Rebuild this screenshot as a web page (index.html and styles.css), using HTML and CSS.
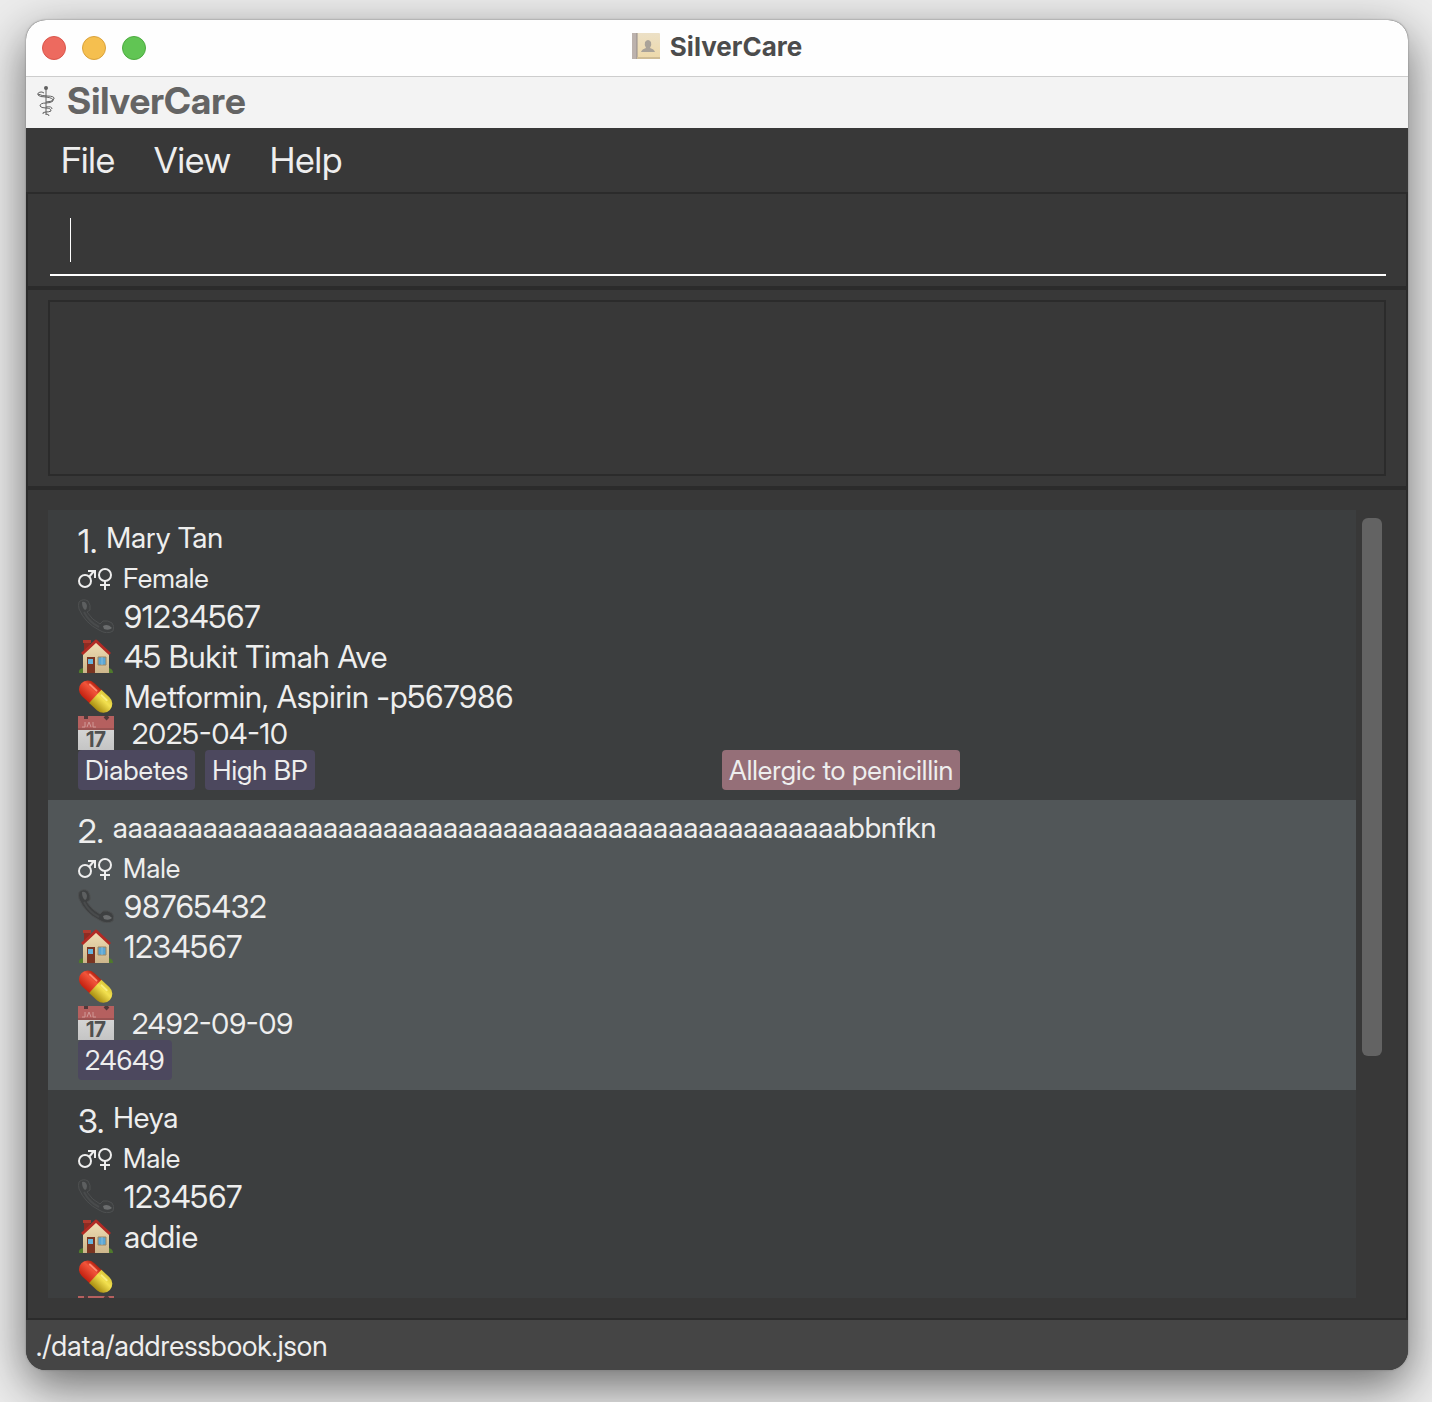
FILE: index.html
```html
<!DOCTYPE html>
<html lang="en">
<head>
<meta charset="utf-8">
<title>SilverCare</title>
<link rel="stylesheet" href="styles.css">
</head>
<body>
<svg class="sprite" aria-hidden="true">
  <defs>
    <linearGradient id="wall" x1="0" y1="0" x2="0" y2="1"><stop offset="0" stop-color="#f0deb4"/><stop offset="1" stop-color="#cdb68c"/></linearGradient>
    <linearGradient id="red" x1="0" y1="0" x2="0" y2="1"><stop offset="0" stop-color="#b5200f"/><stop offset=".35" stop-color="#f2543a"/><stop offset="1" stop-color="#c3200f"/></linearGradient>
    <linearGradient id="yellow" x1="0" y1="0" x2="0" y2="1"><stop offset="0" stop-color="#d9c63a"/><stop offset=".35" stop-color="#f3e14f"/><stop offset="1" stop-color="#a98d10"/></linearGradient>
    <linearGradient id="paper" x1="0" y1="0" x2="0" y2="1"><stop offset="0" stop-color="#e0e0e0"/><stop offset="1" stop-color="#c4c4c4"/></linearGradient>
    <linearGradient id="cover" x1="0" y1="0" x2="0" y2="1"><stop offset="0" stop-color="#ece0c6"/><stop offset="1" stop-color="#eed9a9"/></linearGradient>
  </defs>
  <symbol id="phone" viewBox="0 0 36 34">
    <path d="M1 3Q5-1 10 2Q13 6 12 11L9 13Q14 21 22 25L25 22Q30 21 34 24Q37 27 35 32Q29 36 21 31Q7 24 1 10Q0 6 1 3Z" fill="#3e4041" stroke="#4e5051"/>
    <path d="M4 3Q8 2 9 7Q9 10 7 11Q4 9 4 3Z" fill="#5d5f60"/>
    <path d="M25 27Q30 24 34 29Q31 32 26 30Z" fill="#6b6d6e"/>
    <path d="M6 13Q11 23 21 28" fill="none" stroke="#494b4c" stroke-width="2"/>
  </symbol>
  <symbol id="house" viewBox="0 0 36 34">
    <path d="M6 2h6v9H6z" fill="#8f2b22"/><path d="M5 1h8v3H5z" fill="#b03a2e"/>
    <path d="M1 34q-1-4 4-5h26q4 1 4 5z" fill="#4f7a2c"/>
    <path d="M5 15L18 3l13 12v19H5z" fill="url(#wall)"/>
    <path d="M4 15L18 2l14 13" fill="none" stroke="#b32a24" stroke-width="3" stroke-linejoin="round"/>
    <path d="M9 18h8v16H9z" fill="#7a3522"/><path d="M10 20h5v5h-5z" fill="#65b4dc"/>
    <path d="M20 18h8v8h-8z" fill="#5ba7d6" stroke="#9f8660"/><path d="M24 18v8" stroke="#87bddb"/>
  </symbol>
  <symbol id="pill" viewBox="0 0 36 34">
    <g transform="rotate(43 18 18)">
      <path d="M18 9H7a9 9 0 0 0 0 18h11z" fill="url(#red)"/>
      <path d="M17 9h11a9 9 0 0 1 0 18H17z" fill="url(#yellow)"/>
      <path d="M5 13h9" stroke="#ff8a72" stroke-width="2" stroke-linecap="round"/>
      <path d="M21 13h7" stroke="#f9ee80" stroke-width="2" stroke-linecap="round"/>
    </g>
  </symbol>
  <symbol id="calendar" viewBox="0 0 36 34">
    <path d="M0 0h36v34H0z" fill="url(#paper)"/><path d="M0 0h36v14H0z" fill="#b5605f"/>
    <path d="M0 12h36v2H0z" fill="#9b5352"/>
    <path d="M8 0v3M27 0l3 3" stroke="#52383a" stroke-width="4"/>
    <path d="M7 6v5H4M9 11l2-5 2 5M15 6v5h3" fill="none" stroke="#cf9997"/>
  </symbol>
  <symbol id="genders" viewBox="0 0 36 26">
    <g fill="none" stroke="#eee" stroke-width="2">
      <circle cx="7" cy="14" r="6"/><path d="M11 10l5-6M10 4h7v7"/>
      <circle cx="27" cy="8" r="6"/><path d="M27 14v9M22 18h10"/>
    </g>
  </symbol>
</svg>

<main class="window">
  <div class="titlebar">
    <div class="lights">
      <button class="light close" aria-label="Close"></button>
      <button class="light minimise" aria-label="Minimise"></button>
      <button class="light zoom" aria-label="Zoom"></button>
    </div>
    <div class="title">
      <svg class="book" viewBox="0 0 28 26" aria-hidden="true">
        <rect width="28" height="26" rx="1" fill="url(#cover)"/>
        <path d="M0 0h5v26H0z" fill="#bcb2ad"/><path d="M5 0v26" stroke="#958d89"/>
        <path d="M5 25h23" stroke="#d0bd96" stroke-width="2"/>
        <path d="M9 19q1-3 5-4q-2-3-1-6q3-4 6 0q1 3-1 6q4 1 5 4z" fill="#aaa399"/>
      </svg>
      <span>SilverCare</span>
    </div>
  </div>

  <header class="brand">
    <svg class="staff" viewBox="0 0 18 32" aria-hidden="true">
      <circle cx="9" cy="3" r="2" fill="#606060"/>
      <path d="M9 3v27M5 7Q0 7 1 10Q2 12 9 12Q17 13 16 16Q14 18 9 18Q3 18 3 21Q4 23 9 23Q14 23 14 26Q12 27 9 27Q5 27 6 29M5 7l2 1M1 9q4 2 9 2Q18 11 17 14Q15 17 9 17M9 22Q15 21 15 24M9 29q3 0 3 2" fill="none" stroke="#606060"/>
    </svg>
    <h1>SilverCare</h1>
  </header>

  <nav class="menu">
    <button>File</button>
    <button>View</button>
    <button>Help</button>
  </nav>

  <div class="content">
    <section class="command">
      <input type="text" aria-label="Command">
      <span class="caret"></span>
    </section>
    <section class="result"><output class="result-box" aria-label="Result"></output></section>
    <section class="people">
      <ol class="list">
        <li class="person">
          <div class="name"><span class="number">1.</span><span>Mary Tan</span></div>
          <div class="gender"><svg><use href="#genders"/></svg><span>Female</span></div>
          <div class="field"><svg><use href="#phone"/></svg><span>91234567</span></div>
          <div class="field"><svg><use href="#house"/></svg><span>45 Bukit Timah Ave</span></div>
          <div class="field medicine"><svg><use href="#pill"/></svg><span>Metformin, Aspirin -p567986</span></div>
          <div class="date"><div class="calendar"><svg><use href="#calendar"/></svg><span>17</span></div><span>2025-04-10</span></div>
          <div class="tags">
            <div class="tag-group"><span class="tag">Diabetes</span><span class="tag">High BP</span></div>
            <div class="tag-group"><span class="tag allergy">Allergic to penicillin</span></div>
          </div>
        </li>
        <li class="person">
          <div class="name"><span class="number">2.</span><span>aaaaaaaaaaaaaaaaaaaaaaaaaaaaaaaaaaaaaaaaaaaaaaaaabbnfkn</span></div>
          <div class="gender"><svg><use href="#genders"/></svg><span>Male</span></div>
          <div class="field"><svg><use href="#phone"/></svg><span>98765432</span></div>
          <div class="field"><svg><use href="#house"/></svg><span>1234567</span></div>
          <div class="field medicine"><svg><use href="#pill"/></svg></div>
          <div class="date"><div class="calendar"><svg><use href="#calendar"/></svg><span>17</span></div><span>2492-09-09</span></div>
          <div class="tags"><div class="tag-group"><span class="tag">24649</span></div></div>
        </li>
        <li class="person">
          <div class="name"><span class="number">3.</span><span>Heya</span></div>
          <div class="gender"><svg><use href="#genders"/></svg><span>Male</span></div>
          <div class="field"><svg><use href="#phone"/></svg><span>1234567</span></div>
          <div class="field"><svg><use href="#house"/></svg><span>addie</span></div>
          <div class="field medicine"><svg><use href="#pill"/></svg></div>
          <div class="date"><svg><use href="#calendar"/></svg></div>
        </li>
      </ol>
      <div class="scrollbar"><div class="thumb"></div></div>
    </section>
  </div>
  <footer class="status">./data/addressbook.json</footer>
</main>
</body>
</html>
```
FILE: styles.css
```css
* { box-sizing: border-box; }

body {
  margin: 0;
  height: 100vh;
  padding: 20px 24px 32px 26px;
  background: #ececec;
  color: #eee;
  font-family: "Inter Display", Inter, "Liberation Sans", sans-serif;
  font-variation-settings: "opsz" 32;
  font-size: 28px;
  font-weight: 400;
  overflow: hidden;
}

button, input { font: inherit; color: inherit; border: 0; background: none; padding: 0; }
button { font-variation-settings: inherit; }

.sprite { position: absolute; width: 0; height: 0; }

.window {
  display: flex;
  flex-direction: column;
  height: 100%;
  border-radius: 20px;
  overflow: hidden;
  background: #383838;
  box-shadow: 0 0 2px #777, 0 16px 48px rgba(0, 0, 0, .55);
}

.titlebar {
  display: grid;
  grid-template-columns: 1fr auto 1fr;
  align-items: center;
  height: 57px;
  flex: none;
  padding: 0 16px;
  background: #fefefe;
  border-bottom: 1px solid #cdcdcd;
}

.lights { display: flex; gap: 16px; }
.light { width: 24px; height: 24px; border-radius: 50%; border: 1px solid #d9564c; background: #ed6a5f; }
.minimise { background: #f5bf4f; border-color: #d9a23c; }
.zoom { background: #61c554; border-color: #4dab40; }

.title { display: flex; align-items: center; gap: 10px; padding-bottom: 4px; color: #4c4c4c; font-family: Inter, sans-serif; font-variation-settings: normal; font-size: 26px; font-weight: 700; }
.book { width: 28px; height: 26px; }

.brand {
  display: flex;
  align-items: center;
  gap: 12px;
  height: 51px;
  flex: none;
  padding: 0 0 4px 11px;
  background: #f3f3f3;
}
.staff { width: 18px; height: 32px; }
.brand h1 { margin: 0; color: #646464; font-size: 37px; font-weight: 700; }

.menu { display: flex; gap: 39px; height: 64px; flex: none; padding-left: 35px; font-size: 36px; }

.content {
  display: flex;
  flex-direction: column;
  flex: 1;
  min-height: 0;
  border: 2px solid #2b2b2b;
}

.command { position: relative; flex: none; height: 96px; padding: 12px 20px 10px 22px; border-bottom: 4px solid #2b2b2b; }
.command input { width: 100%; height: 70px; padding: 0 20px; border-bottom: 2px solid #fff; outline: 0; }
.caret { position: absolute; left: 42px; top: 24px; width: 1px; height: 44px; background: #fff; }

.result { flex: none; padding: 10px 20px; border-bottom: 4px solid #2b2b2b; }
.result-box { display: block; height: 176px; border: 2px solid #2b2b2b; }

.people { display: flex; flex: 1; min-height: 0; gap: 6px; padding: 20px 24px 20px 20px; }
.list { flex: 1; min-width: 0; margin: 0; padding: 0; list-style: none; overflow: hidden; background: #3c3e3f; }
.person { height: 290px; padding: 10px 10px 10px 30px; }
.person:nth-child(even) { background: #515658; }
.person svg { flex: none; width: 36px; height: 34px; }

.name, .gender, .field, .date { display: flex; white-space: nowrap; }
.name { height: 38px; gap: 9px; font-size: 29px; line-height: 36px; }
.number { font-size: 33px; line-height: 42px; }
.gender { height: 40px; gap: 9px; line-height: 42px; font-size: 27px; }
.gender svg { height: 26px; margin-top: 9px; }
.field { height: 40px; gap: 10px; font-size: 31px; line-height: 38px; }
.medicine { height: 38px; }
.field svg { margin-top: 1px; }
.date { height: 34px; gap: 18px; font-size: 29px; line-height: 36px; }
.calendar { display: grid; height: 34px; }
.calendar > * { grid-area: 1 / 1; }
.calendar span { padding-top: 13px; color: #505050; font-size: 21px; font-weight: 700; line-height: 22px; text-align: center; }

.tags { display: grid; grid-template-columns: 1fr 1fr; gap: 20px; }
.tag-group { display: flex; gap: 10px; }
.tag { height: 40px; padding: 0 7px; border-radius: 4px; background: #4c485e; font-size: 27px; line-height: 42px; white-space: nowrap; }
.allergy { background: #956f78; }

.scrollbar { width: 20px; padding-top: 8px; }
.thumb { height: 69%; border-radius: 6px; background: #636363; }

.status { flex: none; height: 50px; padding-left: 10px; background: #454545; line-height: 52px; }
```
